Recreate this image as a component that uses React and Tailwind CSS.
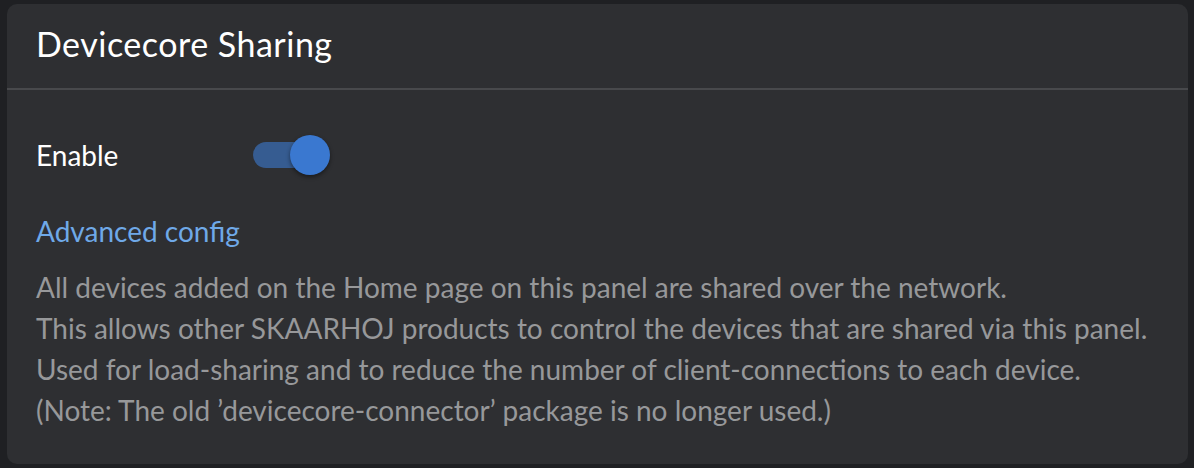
import React, { useState } from 'react';

export default function App() {
    const [enabled, setEnabled] = useState(true);

    return (
        <div className="w-[1194px] h-[468px] bg-[#1f2023] pl-[7px] pr-[6px] pt-[4px] pb-[4px]" style={{ fontFamily: 'Lato, "Noto Sans", sans-serif' }}>
            <div className="h-full rounded-[10px] bg-[#2e2f32] flex flex-col">
                {/* header */}
                <div className="h-[86px] px-[29px] pt-[20px] border-b-2 border-[#48494c]">
                    <h1 className="text-[34px] leading-[40px] tracking-[0.5px] text-white font-normal">Devicecore Sharing</h1>
                </div>

                {/* body */}
                <div className="px-[29px] pt-[40px]">
                    <div className="flex items-center h-[50px]">
                        <span className="w-[217px] text-[28px] leading-[41px] text-white">Enable</span>
                        <button
                            onClick={() => setEnabled(!enabled)}
                            className="relative w-[77px] h-[40px] flex items-center"
                        >
                            <span className="absolute left-0 w-[66px] h-[26px] rounded-full bg-[#365c91]" />
                            <span className="absolute left-[37px] w-[40px] h-[40px] rounded-full bg-[#3a78d0] shadow-[0_2px_4px_rgba(0,0,0,0.45)]" />
                        </button>
                    </div>

                    <div className="mt-[31px] text-[28px] leading-[41px] text-[#6fa9e8]">Advanced config</div>

                    <div className="mt-[15px] text-[28px] leading-[41px] text-[#97989a]">
                        <p>All devices added on the Home page on this panel are shared over the network.</p>
                        <p>This allows other SKAARHOJ products to control the devices that are shared via this panel.</p>
                        <p>Used for load-sharing and to reduce the number of client-connections to each device.</p>
                        <p>(Note: The old ’devicecore-connector’ package is no longer used.)</p>
                    </div>
                </div>
            </div>
        </div>
    );
}
